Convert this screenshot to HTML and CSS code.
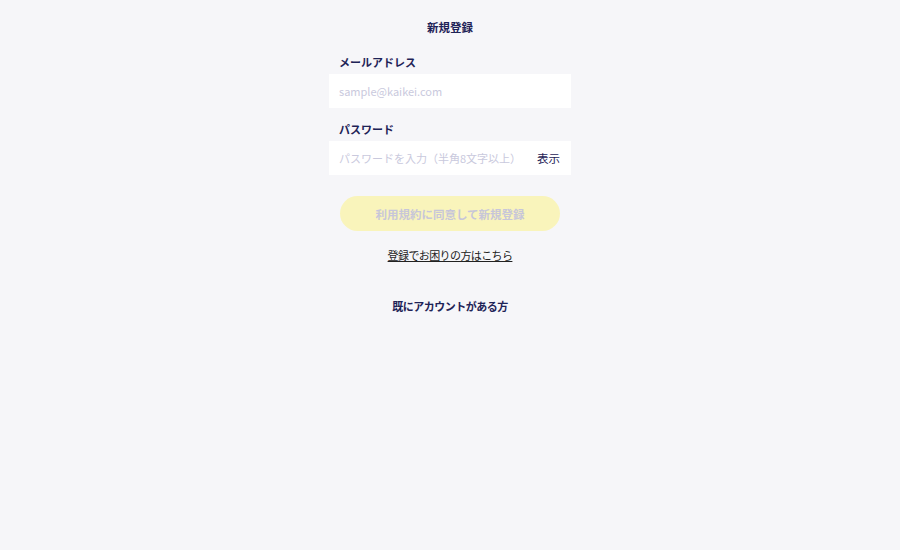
FILE: index.html
```html
<!DOCTYPE html>
<html lang="ja">
<head>
    <meta charset="UTF-8">
    <meta name="viewport" content="width=device-width, initial-scale=1.0">
    <title>新規登録</title>
    <link rel="stylesheet" href="styles.css">
</head>
<body>
    <div class="container">
        <h1 class="title">新規登録</h1>
        <div class="field">
            <label class="label" for="email">メールアドレス</label>
            <div class="input-box">
                <input type="text" id="email" placeholder="sample@kaikei.com">
            </div>
        </div>
        <div class="field">
            <label class="label" for="password">パスワード</label>
            <div class="input-box">
                <input type="password" id="password" placeholder="パスワードを入力（半角8文字以上）">
                <span class="toggle">表示</span>
            </div>
        </div>
        <button class="submit">利用規約に同意して新規登録</button>
        <a class="help" href="#">登録でお困りの方はこちら</a>
        <a class="login" href="#">既にアカウントがある方</a>
    </div>
</body>
</html>
```

FILE: styles.css
```css
body {
    margin: 0;
    background: #f6f6f9;
    font-family: "Noto Sans CJK JP", "Noto Sans", sans-serif;
    color: #1e2357;
}
.container {
    width: 242px;
    margin: 0 auto;
    padding-top: 18px;
    display: flex;
    flex-direction: column;
}
.title {
    margin: 0;
    font-size: 11.5px;
    font-weight: bold;
    text-align: center;
    line-height: 18px;
}
.field {
    margin-top: 17px;
}
.field + .field {
    margin-top: 12px;
}
.label {
    display: block;
    padding-left: 10px;
    font-size: 11px;
    font-weight: bold;
    line-height: 18px;
    margin-bottom: 3px;
}
.input-box {
    display: flex;
    align-items: center;
    height: 34px;
    background: #fff;
    padding: 0 10px;
}
.input-box input {
    flex: 1;
    min-width: 0;
    border: none;
    outline: none;
    background: transparent;
    font-family: inherit;
    font-size: 11px;
    color: #1e2357;
    padding: 0;
}
.input-box input::placeholder {
    color: #c9c9dd;
}
.toggle {
    font-size: 11.5px;
    color: #1e2357;
    margin-right: 1px;
}
.submit {
    margin: 21px 11px 0;
    height: 35px;
    border: none;
    border-radius: 18px;
    background: #f9f4bb;
    color: #c7c6d9;
    font-family: inherit;
    font-size: 11.5px;
    font-weight: bold;
}
.help {
    margin-top: 15px;
    align-self: center;
    font-size: 11px;
    letter-spacing: -0.6px;
    color: #222;
    line-height: 18px;
}
.login {
    margin-top: 33px;
    align-self: center;
    font-size: 11px;
    letter-spacing: -0.5px;
    font-weight: bold;
    color: #1e2357;
    text-decoration: none;
    line-height: 18px;
}
```
